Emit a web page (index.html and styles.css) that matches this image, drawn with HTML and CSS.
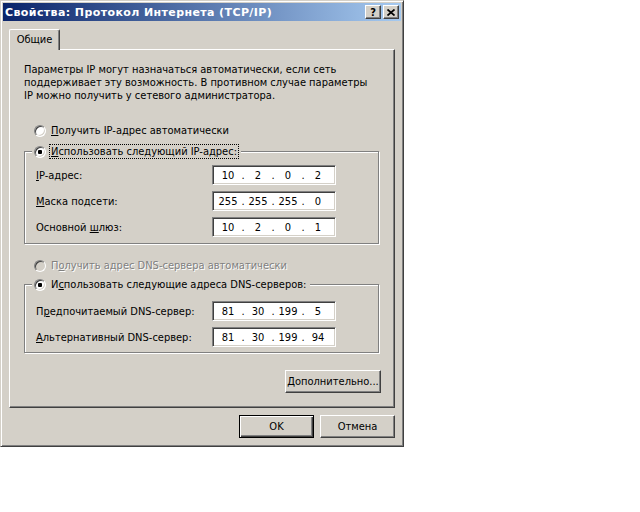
FILE: index.html
```html
<html>
<head>
<meta charset="utf-8">
<link rel="stylesheet" href="styles.css">
</head>
<body>
<div class="window">
	<div class="titlebar">
		<span class="title">Свойства: Протокол Интернета (TCP/IP)</span>
		<div class="caption-buttons">
			<span class="cap-btn help">?</span>
			<span class="cap-btn close"><svg width="8" height="7" viewBox="0 0 8 7"><path d="M0.5 0.5 L7.5 6.5 M7.5 0.5 L0.5 6.5" stroke="#000" stroke-width="1.7" fill="none"/></svg></span>
		</div>
	</div>
	<div class="client">
		<div class="tab-strip">
			<div class="tab">Общие</div>
		</div>
		<div class="panel">
			<p class="intro">Параметры IP могут назначаться автоматически, если сеть<br>поддерживает эту возможность. В противном случае параметры<br>IP можно получить у сетевого администратора.</p>

			<div class="option first"><span class="radio"></span><span class="caption"><u>П</u>олучить IP-адрес автоматически</span></div>

			<fieldset class="group group-ip">
				<legend class="option"><span class="radio checked"></span><span class="caption focus"><u>И</u>спользовать следующий IP-адрес:</span></legend>
				<div class="rows">
					<div class="field-row">
						<span><u>I</u>P-адрес:</span>
						<div class="ipbox"><span class="oct">10</span><span class="dot">.</span><span class="oct">2</span><span class="dot">.</span><span class="oct">0</span><span class="dot">.</span><span class="oct">2</span></div>
					</div>
					<div class="field-row">
						<span><u>М</u>аска подсети:</span>
						<div class="ipbox"><span class="oct">255</span><span class="dot">.</span><span class="oct">255</span><span class="dot">.</span><span class="oct">255</span><span class="dot">.</span><span class="oct">0</span></div>
					</div>
					<div class="field-row">
						<span>Основной <u>ш</u>люз:</span>
						<div class="ipbox"><span class="oct">10</span><span class="dot">.</span><span class="oct">2</span><span class="dot">.</span><span class="oct">0</span><span class="dot">.</span><span class="oct">1</span></div>
					</div>
				</div>
			</fieldset>

			<div class="option disabled"><span class="radio"></span><span class="caption">П<u>о</u>лучить адрес DNS-сервера автоматически</span></div>

			<fieldset class="group group-dns">
				<legend class="option"><span class="radio checked"></span><span class="caption">И<u>с</u>пользовать следующие адреса DNS-серверов:</span></legend>
				<div class="rows">
					<div class="field-row">
						<span>П<u>р</u>едпочитаемый DNS-сервер:</span>
						<div class="ipbox"><span class="oct">81</span><span class="dot">.</span><span class="oct">30</span><span class="dot">.</span><span class="oct">199</span><span class="dot">.</span><span class="oct">5</span></div>
					</div>
					<div class="field-row">
						<span><u>А</u>льтернативный DNS-сервер:</span>
						<div class="ipbox"><span class="oct">81</span><span class="dot">.</span><span class="oct">30</span><span class="dot">.</span><span class="oct">199</span><span class="dot">.</span><span class="oct">94</span></div>
					</div>
				</div>
			</fieldset>

			<div class="advanced-row">
				<button class="btn advanced"><u>Д</u>ополнительно...</button>
			</div>
		</div>
		<div class="dialog-buttons">
			<button class="btn default">OK</button>
			<button class="btn">Отмена</button>
		</div>
	</div>
</div>
</body>
</html>
```

FILE: styles.css
```css
	* {
		box-sizing: border-box;
	}
	body {
		margin: 0;
		background: #fff;
		font-family: "DejaVu Sans Condensed", "DejaVu Sans", sans-serif;
		font-size: 11px;
		line-height: 13px;
		color: #000;
	}
	u {
		text-decoration: underline;
		text-underline-offset: 1px;
	}
	.window {
		width: 404px;
		height: 447px;
		padding: 2px;
		background: #d4d0c8;
		border: 1px solid;
		border-color: #d4d0c8 #404040 #404040 #d4d0c8;
		box-shadow: inset 1px 1px #fff, inset -1px -1px #808080;
	}
	.titlebar {
		height: 18px;
		display: flex;
		align-items: center;
		justify-content: space-between;
		padding: 0 2px;
		background: linear-gradient(to right, #0a246a, #a6caf0);
	}
	.title {
		color: #fff;
		font-family: "DejaVu Sans", sans-serif;
		font-weight: bold;
		letter-spacing: 0.4px;
	}
	.caption-buttons {
		display: flex;
		gap: 2px;
	}
	.cap-btn {
		width: 16px;
		height: 14px;
		display: flex;
		align-items: center;
		justify-content: center;
		background: #d4d0c8;
		border: 1px solid;
		border-color: #fff #404040 #404040 #fff;
		box-shadow: inset -1px -1px #808080;
		font-weight: bold;
		font-size: 11px;
	}
	.client {
		padding: 8px 0 0 6px;
	}
	.tab-strip {
		display: flex;
	}
	.tab {
		position: relative;
		z-index: 1;
		width: 51px;
		height: 21px;
		margin-bottom: -1px;
		display: flex;
		align-items: center;
		justify-content: center;
		padding-bottom: 1px;
		background: #d4d0c8;
		border: 1px solid;
		border-bottom: none;
		border-color: #fff #404040 #fff #fff;
		border-radius: 2px 2px 0 0;
		box-shadow: inset -1px 0 #808080;
	}
	.panel {
		width: 386px;
		height: 359px;
		padding: 13px 13px 0 14px;
		border: 1px solid;
		border-color: #fff #404040 #404040 #fff;
		box-shadow: inset -1px -1px #808080;
	}
	.intro {
		margin: 0;
	}
	.option {
		display: flex;
		align-items: center;
		gap: 3px;
		margin-left: 10px;
	}
	.option.first {
		margin-top: 21px;
	}
	.caption {
		border: 1px solid transparent;
		padding: 0 1px;
	}
	.caption.focus {
		border: 1px dotted #000;
	}
	.radio {
		flex: none;
		width: 12px;
		height: 12px;
		display: flex;
		align-items: center;
		justify-content: center;
		border-radius: 50%;
		background: #fff;
		border: 1px solid;
		border-color: #808080 #fff #fff #808080;
		box-shadow: inset 1px 1px #404040, inset -1px -1px #d4d0c8;
	}
	.radio.checked::after {
		content: "";
		width: 4px;
		height: 4px;
		border-radius: 1px;
		background: #000;
	}
	.option.disabled {
		margin-top: 14px;
		color: #808080;
		text-shadow: 1px 1px #fff;
	}
	.option.disabled .radio {
		background: #d4d0c8;
	}
	.group {
		width: 355px;
		margin: 6px 0 0;
		padding: 6px 0 6px;
		min-width: 0;
		border: 1px solid #808080;
		box-shadow: inset 1px 1px #fff, 1px 1px #fff;
	}
	.group legend.option {
		margin-left: 7px;
		padding: 0 2px;
		background: #d4d0c8;
	}
	.group-dns {
		margin-top: 4px;
		padding: 9px 0 5px;
	}
	.rows {
		display: flex;
		flex-direction: column;
		gap: 6px;
	}
	.field-row {
		display: grid;
		grid-template-columns: 176px 124px;
		align-items: center;
		height: 20px;
		padding-left: 11px;
	}
	.ipbox {
		height: 20px;
		display: flex;
		align-items: center;
		padding-left: 3px;
		background: #fff;
		border: 1px solid;
		border-color: #808080 #fff #fff #808080;
		box-shadow: inset 1px 1px #404040, inset -1px -1px #d4d0c8;
	}
	.oct {
		width: 24px;
		text-align: center;
	}
	.dot {
		width: 6px;
		text-align: center;
	}
	.advanced-row {
		display: flex;
		justify-content: flex-end;
		margin-top: 17px;
	}
	.btn {
		width: 75px;
		height: 23px;
		padding: 0;
		font: inherit;
		color: #000;
		background: #d4d0c8;
		border: 1px solid;
		border-color: #fff #404040 #404040 #fff;
		box-shadow: inset -1px -1px #808080;
	}
	.btn.advanced {
		width: 96px;
	}
	.btn.default {
		border-color: #000;
		box-shadow: inset 1px 1px #fff, inset -1px -1px #404040, inset -2px -2px #808080;
	}
	.dialog-buttons {
		width: 386px;
		display: flex;
		justify-content: flex-end;
		gap: 6px;
		margin-top: 7px;
	}
```
